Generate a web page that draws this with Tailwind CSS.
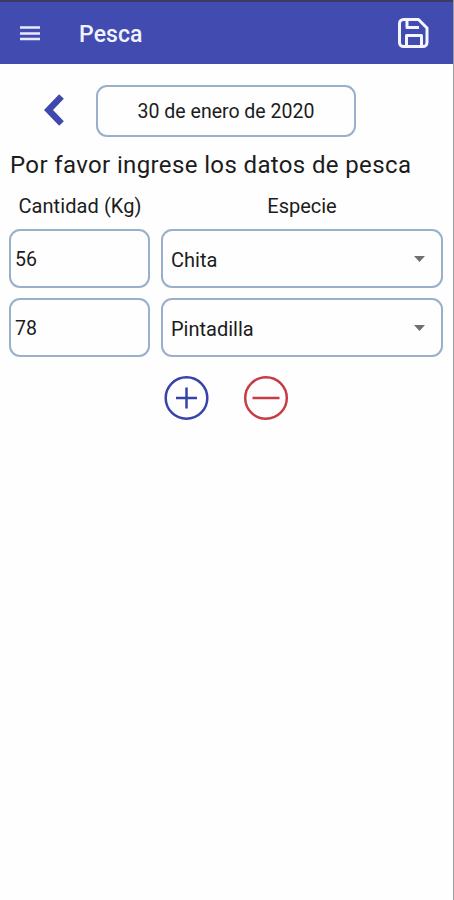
<!DOCTYPE html>
<html lang="es">
<head>
<meta charset="utf-8">
<title>Pesca</title>
<script src="https://cdn.jsdelivr.net/npm/@tailwindcss/browser@4"></script>
</head>
<body class="bg-white">
<div class="w-[454px] h-[900px] overflow-hidden flex flex-col border-r border-[#9a9a9a] bg-[#fefefe] font-['Roboto',sans-serif] text-[#1c1c1c]">
  <header class="h-16 shrink-0 flex items-center border-t-2 border-[#3b3b63] bg-[#424cb0] pl-5 pr-[24px]">
    <svg class="w-[20px] h-[16px]" viewBox="0 0 20 16" fill="none" stroke="#e6e9ff" stroke-width="2.500"><path d="M0 2.500h20M0 8.500h20M0 14h20"/></svg>
    <h1 class="ml-[39px] pt-[2px] text-[23px] font-medium leading-none tracking-[0.1px] text-[#f1f2ff]">Pesca</h1>
    <svg class="ml-auto w-[31px] h-8" viewBox="0 0 31 32" fill="none" stroke="#f4f5ff" stroke-width="3" stroke-linejoin="round"><path d="M5 2.500h15.500l8.500 8.500v14.500a4 4 0 0 1-4 4H5.500a4 4 0 0 1-4-4V6.500a4 4 0 0 1 4-4z"/><path d="M9 3v7.500h12M8.500 29V18.500h15V29"/></svg>
  </header>
  <main class="flex flex-col pt-[21px]">
    <div class="flex items-center pl-[44px]">
      <svg class="w-[20px] h-[32px] mb-[3px]" viewBox="0 0 20 32" fill="none" stroke="#3f49ad" stroke-width="6.500"><path d="M17.500 2.500L4.500 16l13 13.500"/></svg>
      <div class="ml-8 w-[260px] h-[52px] rounded-[11px] border-2 border-[#9aafcb] flex items-center justify-center pt-[2px] text-[19.500px]">30 de enero de 2020</div>
    </div>
    <p class="pl-[10px] mt-[13px] h-[30px] leading-[30px] text-[24px] tracking-[0.37px] whitespace-nowrap">Por favor ingrese los datos de pesca</p>
    <div class="flex mt-[14px] h-6 leading-6 text-[20px]">
      <span class="w-[160px] text-center tracking-[0.080px]">Cantidad (Kg)</span>
      <span class="w-[284px] text-center">Especie</span>
    </div>
    <div class="flex flex-col gap-[10px] mt-[11px] pl-[9px] text-[20px]">
      <div class="flex gap-[11px]">
        <div class="w-[141px] h-[59px] rounded-[11px] border-2 border-[#9aafcb] flex items-center pl-1 pt-[2px] text-[19.500px]">56</div>
        <div class="w-[282px] h-[59px] rounded-[11px] border-2 border-[#9aafcb] flex items-center justify-between pl-[8px] pr-[16px]"><span class="pt-[2px]">Chita</span><svg class="w-[11px] h-[6px]" viewBox="0 0 11 6"><path d="M0 0h11L5.500 6z" fill="#707070"/></svg></div>
      </div>
      <div class="flex gap-[11px]">
        <div class="w-[141px] h-[59px] rounded-[11px] border-2 border-[#9aafcb] flex items-center pl-1 pt-[2px] text-[19.500px]">78</div>
        <div class="w-[282px] h-[59px] rounded-[11px] border-2 border-[#9aafcb] flex items-center justify-between pl-[8px] pr-[16px]"><span class="pt-[2px]">Pintadilla</span><svg class="w-[11px] h-[6px]" viewBox="0 0 11 6"><path d="M0 0h11L5.500 6z" fill="#707070"/></svg></div>
      </div>
    </div>
    <div class="flex gap-[34px] mt-[18px] pl-[163px]">
      <svg class="w-[46px] h-[46px]" viewBox="0 0 46 46" fill="none" stroke="#3843aa" stroke-width="2.500"><circle cx="23.500" cy="23" r="20.800"/><path d="M13 23h21M23.500 12.500v21"/></svg>
      <svg class="w-[46px] h-[46px]" viewBox="0 0 46 46" fill="none" stroke="#c63c46" stroke-width="2.500"><circle cx="23" cy="23" r="20.800"/><path d="M9.500 23h27"/></svg>
    </div>
  </main>
</div>
</body>
</html>
